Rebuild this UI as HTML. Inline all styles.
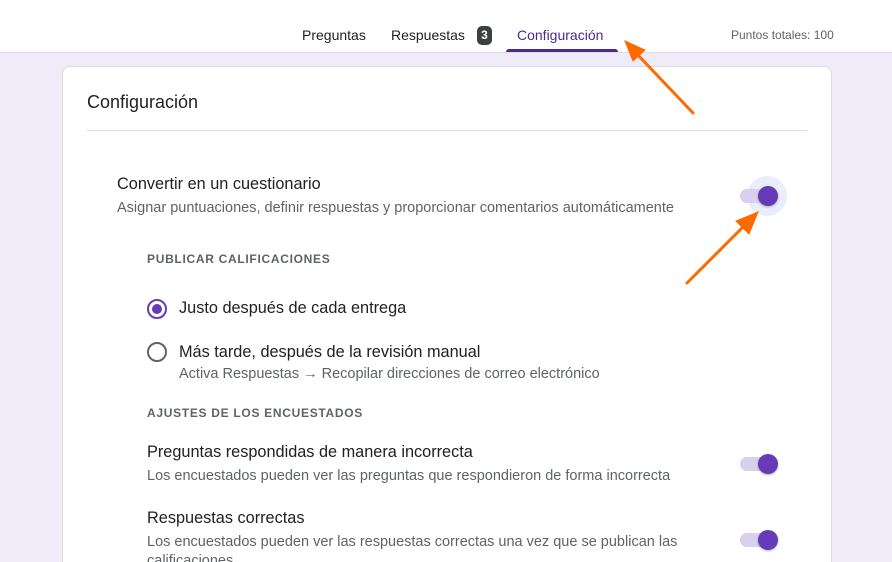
<!DOCTYPE html>
<html style="width:892px;height:562px;overflow:hidden"><head><meta charset="utf-8"><style>
*{margin:0;padding:0;box-sizing:border-box}
body{width:892px;height:562px;overflow:hidden;background:#f0ebf8;font-family:"Liberation Sans",Roboto,sans-serif;position:relative;color:#202124}
.hdr{position:absolute;left:0;top:0;width:892px;height:53px;background:#fff;border-bottom:1px solid #dadce0}
.tab{position:absolute;top:27px;font-size:14px;color:#202124;font-weight:500}
.badge{position:absolute;left:477px;top:26px;width:15px;height:19px;border-radius:5px;background:#3c4043;color:#fff;font-size:12px;font-weight:bold;text-align:center;line-height:19px}
.card{position:absolute;left:62px;top:66px;width:770px;height:520px;background:#fff;border:1px solid #dadce0;border-radius:8px}
.t{position:absolute;white-space:nowrap}
.s{font-size:14.5px;color:#5f6368}
.l{font-size:16.3px}
.tg{position:absolute;width:37px;height:14px;border-radius:7px;background:#d9cfee}
.tg::after{content:"";position:absolute;right:-1px;top:-3px;width:20px;height:20px;border-radius:50%;background:#673ab7;box-shadow:0 1px 2px rgba(0,0,0,.3)}
.rad{position:absolute;width:20px;height:20px;border-radius:50%;border:2px solid #5f6368}
</style></head><body>
<div class="hdr">
<div class="tab" style="left:302px">Preguntas</div>
<div class="tab" style="left:391px">Respuestas</div>
<div class="badge">3</div>
<div class="tab" style="left:517px;color:#4a2b91">Configuración</div>
<div style="position:absolute;left:506px;top:49px;width:112px;height:3px;background:#4a2b91;border-radius:3px 3px 0 0"></div>
<div class="t" style="left:731px;top:28px;font-size:12px;color:#5f6368">Puntos totales: 100</div>
</div>
<div class="card"></div>
<div class="t" style="left:87px;top:92px;font-size:18px">Configuración</div>
<div style="position:absolute;left:87px;top:130px;width:720px;height:1px;background:#dadce0"></div>
<div class="t l" style="left:117px;top:175px">Convertir en un cuestionario</div>
<div class="t s" style="left:117px;top:200px">Asignar puntuaciones, definir respuestas y proporcionar comentarios automáticamente</div>
<div style="position:absolute;left:747px;top:176px;width:40px;height:40px;border-radius:50%;background:#e8eefb"></div>
<div class="tg" style="left:740px;top:189px"></div>
<div class="t" style="left:147px;top:252px;font-size:12px;font-weight:bold;letter-spacing:.7px;color:#5f6368">PUBLICAR CALIFICACIONES</div>
<div class="rad" style="left:147px;top:299px;border-color:#673ab7"><div style="position:absolute;left:3px;top:3px;width:10px;height:10px;border-radius:50%;background:#673ab7"></div></div>
<div class="t l" style="left:179px;top:299px">Justo después de cada entrega</div>
<div class="rad" style="left:147px;top:342px"></div>
<div class="t l" style="left:179px;top:343px">Más tarde, después de la revisión manual</div>
<div class="t s" style="left:179px;top:366px">Activa Respuestas → Recopilar direcciones de correo electrónico</div>
<div class="t" style="left:147px;top:406px;font-size:12px;font-weight:bold;letter-spacing:.7px;color:#5f6368">AJUSTES DE LOS ENCUESTADOS</div>
<div class="t l" style="left:147px;top:443px">Preguntas respondidas de manera incorrecta</div>
<div class="t s" style="left:147px;top:468px">Los encuestados pueden ver las preguntas que respondieron de forma incorrecta</div>
<div class="tg" style="left:740px;top:457px"></div>
<div class="t l" style="left:147px;top:509px">Respuestas correctas</div>
<div class="t s" style="left:147px;top:534px">Los encuestados pueden ver las respuestas correctas una vez que se publican las</div>
<div class="t s" style="left:147px;top:553px">calificaciones</div>
<div class="tg" style="left:740px;top:533px"></div>
<svg width="892" height="562" style="position:absolute;left:0;top:0">
<g stroke="#ff6a00" stroke-width="3" stroke-linecap="round" fill="#ff6a00">
<line x1="693" y1="113" x2="636" y2="53"/>
<polygon points="625,41 645,50 633,61" stroke-width="1"/>
<line x1="687" y1="283" x2="746" y2="224"/>
<polygon points="758,212 736,221 749,234" stroke-width="1"/>
</g></svg>
</body></html>
